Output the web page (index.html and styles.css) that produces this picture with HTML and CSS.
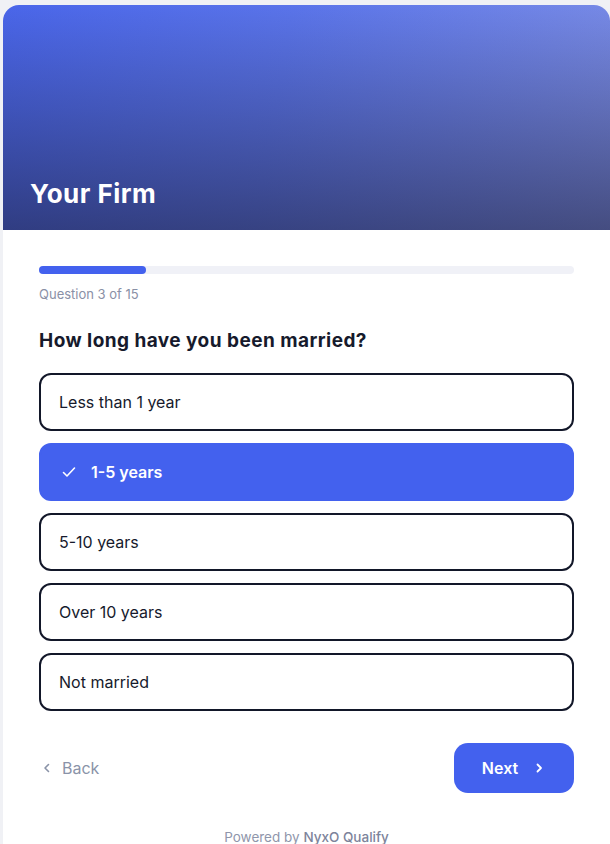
FILE: index.html
```html
<!DOCTYPE html>
<html>
<head>
	<meta charset="UTF-8">
	<title>Your Firm</title>
	<link rel="stylesheet" href="styles.css">
</head>
<body>
	<div class="card">
		<div class="hero">
			<h1 class="firm">Your Firm</h1>
		</div>
		<div class="content">
			<div class="progress"><div class="progress-fill" style="width: 20%"></div></div>
			<div class="step">Question 3 of 15</div>
			<h2 class="question">How long have you been married?</h2>

			<div class="options">
				<button class="option">Less than 1 year</button>
				<button class="option selected">
					<svg class="check" width="16" height="16" viewBox="0 0 16 16" fill="none" stroke="currentColor" stroke-width="1.6" stroke-linecap="round" stroke-linejoin="round"><path d="M2.5 8.5l3.5 3.5 7.5-8"/></svg>
					1-5 years
				</button>
				<button class="option">5-10 years</button>
				<button class="option">Over 10 years</button>
				<button class="option">Not married</button>
			</div>

			<div class="nav">
				<button class="back">
					<svg width="14" height="14" viewBox="0 0 14 14" fill="none" stroke="currentColor" stroke-width="1.6" stroke-linecap="round" stroke-linejoin="round"><path d="M8.5 3.5L5 7l3.5 3.5"/></svg>
					Back
				</button>
				<button class="next">
					Next
					<svg width="14" height="14" viewBox="0 0 14 14" fill="none" stroke="currentColor" stroke-width="1.8" stroke-linecap="round" stroke-linejoin="round"><path d="M5.5 3.5L9 7l-3.5 3.5"/></svg>
				</button>
			</div>

			<p class="powered">Powered by <span>NyxO Qualify</span></p>
		</div>
	</div>
</body>
</html>
```

FILE: styles.css
```css
body {
	margin: 0;
	padding: 5px 0 0 3px;
	background-color: #f0f1f5;
	font-family: Inter, "Noto Sans", sans-serif;
	color: #161a2c;
}
.card {
	width: 607px;
	background: #ffffff;
	border-radius: 16px 16px 0 0;
	overflow: hidden;
}
.hero {
	height: 225px;
	display: flex;
	align-items: flex-end;
	padding: 0 27px 21px;
	box-sizing: border-box;
	background:
		linear-gradient(to bottom, rgba(25, 25, 45, 0) 0%, rgba(25, 25, 45, 0.55) 100%),
		linear-gradient(100deg, #4a66ea 0%, #5a74ea 45%, #7a8ce6 100%);
}
.firm {
	margin: 0;
	color: #ffffff;
	font-size: 26px;
	font-weight: 700;
	letter-spacing: 0.5px;
}
.content {
	padding: 36px 36px 0;
}
.progress {
	height: 8px;
	border-radius: 4px;
	background: #f0f1f7;
}
.progress-fill {
	height: 100%;
	border-radius: 4px;
	background: #4361ee;
}
.step {
	margin-top: 11px;
	font-size: 13px;
	line-height: 18px;
	color: #8a90a6;
}
.question {
	margin: 26px 0 20px;
	font-size: 19px;
	line-height: 24px;
	font-weight: 700;
	letter-spacing: 0.45px;
	color: #161a2c;
}
.options {
	display: flex;
	flex-direction: column;
	gap: 12px;
}
.option {
	display: flex;
	align-items: center;
	gap: 14px;
	height: 58px;
	padding: 0 18px;
	border: 2px solid #121729;
	border-radius: 12px;
	background: #ffffff;
	font-family: inherit;
	font-size: 16px;
	color: #161a2c;
	text-align: left;
	cursor: pointer;
}
.option.selected {
	border-color: #4361ee;
	background: #4361ee;
	color: #ffffff;
	font-weight: 600;
}
.check {
	margin-left: 2px;
}
.nav {
	display: flex;
	justify-content: space-between;
	align-items: center;
	margin-top: 32px;
}
.back {
	display: flex;
	align-items: center;
	gap: 8px;
	padding: 0 0 0 1px;
	border: none;
	background: none;
	font-family: inherit;
	font-size: 16px;
	color: #8a93a8;
	cursor: pointer;
}
.next {
	display: flex;
	align-items: center;
	justify-content: center;
	gap: 14px;
	width: 120px;
	height: 50px;
	border: none;
	border-radius: 14px;
	background: #4361ee;
	font-family: inherit;
	font-size: 16px;
	font-weight: 600;
	color: #ffffff;
	cursor: pointer;
}
.powered {
	margin: 36px 0 0;
	padding-bottom: 20px;
	text-align: center;
	font-size: 13.5px;
	color: #8f96ab;
}
.powered span {
	font-weight: 500;
	color: #7d849b;
}
```
